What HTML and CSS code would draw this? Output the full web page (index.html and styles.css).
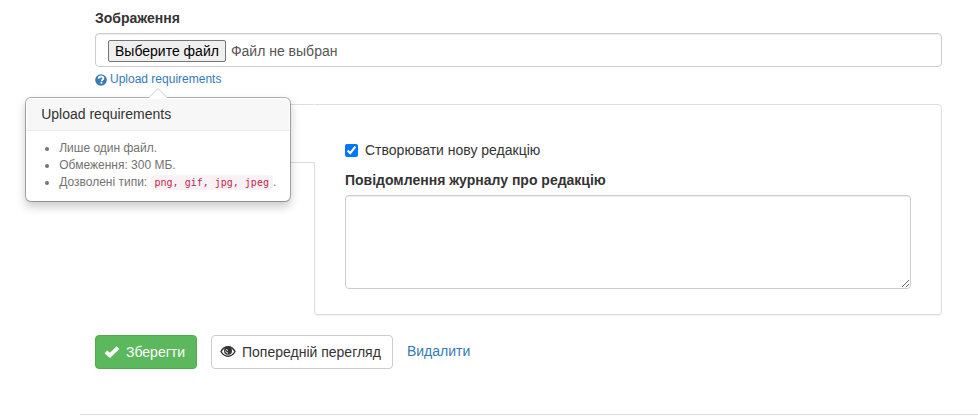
FILE: index.html
```html
<!DOCTYPE html>
<html lang="uk">

<head>

    <meta charset="UTF-8">
    <meta name="viewport" content="width=device-width, initial-scale=1.0">
    <title>Зображення</title>

    <link rel="stylesheet" href="styles.css">

</head>

<body>

    <form class="node-form">

        <div class="form-group">
            <label class="control-label" for="image">Зображення</label>
            <div class="form-control file-control">
                <input type="file" id="image" class="file-input" accept=".png,.gif,.jpg,.jpeg">
                <button type="button" id="imageButton" class="file-button">Выберите файл</button>
                <span id="imageName" class="file-name">Файл не выбран</span>
            </div>

            <div class="help">
                <a href="#requirements" class="help-link">
                    <svg class="icon" viewBox="0 0 12 12" aria-hidden="true">
                        <circle cx="6" cy="6" r="5.8" fill="currentColor" />
                        <path d="M3.6 4.7C3.700 3.200 4.700 2.500 6.100 2.500c1.400 0 2.300.700 2.300 1.800 0 1.500-1.800 1.400-1.800 2.900" fill="none" stroke="#fff" stroke-width="1.800" />
                        <path d="M5.500 8h1.900v1.600H5.500z" fill="#fff" />
                    </svg>
                    Upload requirements
                </a>

                <div id="requirements" class="popover">
                    <h3 class="popover-title">Upload requirements</h3>
                    <ul class="popover-list">
                        <li>Лише один файл.</li>
                        <li>Обмеження: 300 МБ.</li>
                        <li>Дозволені типи: <code>png, gif, jpg, jpeg</code>.</li>
                    </ul>
                </div>
            </div>
        </div>

        <div class="vertical-tabs">
            <div class="tabs">
                <div class="tab"></div>
            </div>
            <div class="tab-panel">
                <div class="checkbox">
                    <input type="checkbox" id="revision" checked>
                    <label for="revision">Створювати нову редакцію</label>
                </div>
                <label class="control-label" for="log">Повідомлення журналу про редакцію</label>
                <textarea id="log" class="form-control" rows="4"></textarea>
            </div>
        </div>

        <div class="actions">
            <button type="submit" class="btn btn-success">
                <svg class="icon" viewBox="0 0 16 14" aria-hidden="true">
                    <path d="M.5 8.200L3.200 5.500l2.800 2.300L12.600 1.300l2.700 2.600L6 13z" fill="currentColor" />
                </svg>
                Зберегти
            </button>
            <button type="button" class="btn btn-default">
                <svg class="icon" viewBox="0 0 16 14" aria-hidden="true">
                    <path d="M1 6.500C2.700 3.500 5 1.800 8 1.800s5.300 1.700 7 4.700c-1.700 3-4 4.700-7 4.700S2.700 9.500 1 6.500z" fill="none" stroke="currentColor" stroke-width="1.500" />
                    <circle cx="8" cy="5.800" r="4" fill="currentColor" />
                    <path d="M5.600 5.600C5.600 7.200 6.600 8 8 8" fill="none" stroke="#fff" />
                    <path d="M6.300 4.400L8 5.600" fill="none" stroke="#fff" />
                </svg>
                Попередній перегляд
            </button>
            <a href="#delete" class="delete-link">Видалити</a>
        </div>

    </form>

    <hr>

    <script>

        let image = document.getElementById('image')
        let imageName = document.getElementById('imageName')

        document.getElementById('imageButton').addEventListener('click', function () {
            image.click()
        })

        image.addEventListener('change', function () {
            imageName.innerText = image.files.length ? image.files[0].name : 'Файл не выбран'
        })

    </script>

</body>

</html>
```
FILE: styles.css
```css
* {
    box-sizing: border-box;
}

body {
    margin: 0;
    padding-left: 80px;
    background-color: #fff;
    color: #333;
    font-family: "Liberation Sans", Arial, sans-serif;
    font-size: 14px;
    line-height: 20px;
}

a {
    color: #337ab7;
    text-decoration: none;
}

button,
textarea {
    font: inherit;
}

.icon {
    flex: none;
}

.node-form {
    padding: 8px 36px 0 15px;
}

.form-group {
    margin-bottom: 16px;
}

.control-label {
    display: block;
    margin-bottom: 5px;
    font-weight: bold;
}

.form-control {
    display: block;
    width: 100%;
    padding: 6px 12px;
    border: 1px solid #ccc;
    border-radius: 4px;
    background-color: #fff;
    color: #555;
    box-shadow: inset 0 1px 1px rgba(0, 0, 0, 0.075);
}

.file-control {
    display: flex;
    align-items: center;
    gap: 5px;
    height: 34px;
    padding: 6px 12px 4px;
    position: relative;
}

.file-input {
    position: absolute;
    width: 1px;
    height: 1px;
    opacity: 0;
    pointer-events: none;
}

.file-button {
    height: 22px;
    padding: 0 6px;
    border: 1px solid #767676;
    border-radius: 2px;
    background-color: #efefef;
    color: #000;
}

.help {
    display: table;
    margin-top: 4px;
    position: relative;
    font-size: 12px;
    line-height: 17px;
    color: #737373;
}

.help-link {
    display: flex;
    align-items: center;
    gap: 3px;
}

.help-link .icon {
    width: 12px;
    height: 12px;
}

.popover {
    position: absolute;
    z-index: 10;
    top: 100%;
    left: 50%;
    width: 266px;
    margin-top: 9px;
    padding: 1px;
    transform: translateX(-50%);
    border: 1px solid rgba(0, 0, 0, 0.3);
    border-radius: 6px;
    background-color: #fff;
    background-clip: padding-box;
    box-shadow: 0 5px 10px rgba(0, 0, 0, 0.2);
}

.popover:before,
.popover:after {
    content: '';
    position: absolute;
    left: 50%;
    bottom: 100%;
    transform: translateX(-50%);
    border: 10px solid transparent;
    border-top-width: 0;
    border-bottom-color: #ccc;
}

.popover:after {
    border-width: 0 9px 9px;
    border-bottom-color: #fff;
}

.popover-title {
    margin: 0;
    padding: 8px 14px;
    border-bottom: 1px solid #ebebeb;
    border-radius: 5px 5px 0 0;
    background-color: #f7f7f7;
    color: #333;
    font-size: 14px;
    font-weight: normal;
    line-height: 15px;
}

.popover-list {
    margin: 0;
    padding: 9px 0 9px 32px;
    white-space: nowrap;
}

.popover-list code {
    padding: 2px 4px;
    border-radius: 4px;
    background-color: #f9f2f4;
    color: #c7254e;
    font-family: "DejaVu Sans Mono", monospace;
    font-size: 10px;
    line-height: 1;
}

.vertical-tabs {
    display: flex;
    align-items: flex-start;
}

.tabs {
    flex: 0 0 220px;
    margin-right: -1px;
    z-index: 1;
}

.tab {
    height: 59px;
    border: 1px solid #ddd;
    border-right-color: #fff;
    border-radius: 4px 0 0 0;
    background-color: #fff;
}

.tab-panel {
    flex: 1;
    padding: 35px 30px 25px;
    border: 1px solid #ddd;
    border-radius: 0 4px 4px 4px;
    box-shadow: 0 1px 1px rgba(0, 0, 0, 0.05);
}

.checkbox {
    display: flex;
    align-items: center;
    gap: 7px;
    margin-bottom: 10px;
}

.checkbox input {
    width: 13px;
    height: 13px;
    margin: 0;
    accent-color: #0075ff;
}

textarea {
    height: 94px;
    resize: vertical;
}

.actions {
    display: flex;
    align-items: flex-start;
    gap: 14px;
    margin-top: 20px;
}

.btn {
    display: flex;
    align-items: center;
    gap: 6px;
    height: 34px;
    padding: 0 11px 0 8px;
    border: 1px solid #ccc;
    border-radius: 4px;
    background-color: #fff;
    color: #333;
}

.btn .icon {
    width: 16px;
    height: 14px;
}

.btn-success {
    border-color: #4cae4c;
    background-color: #5cb85c;
    color: #fff;
}

.delete-link {
    padding: 6px 0;
}

hr {
    margin: 45px 0 0;
    border: 0;
    border-top: 1px solid #e1e1e1;
}
```
